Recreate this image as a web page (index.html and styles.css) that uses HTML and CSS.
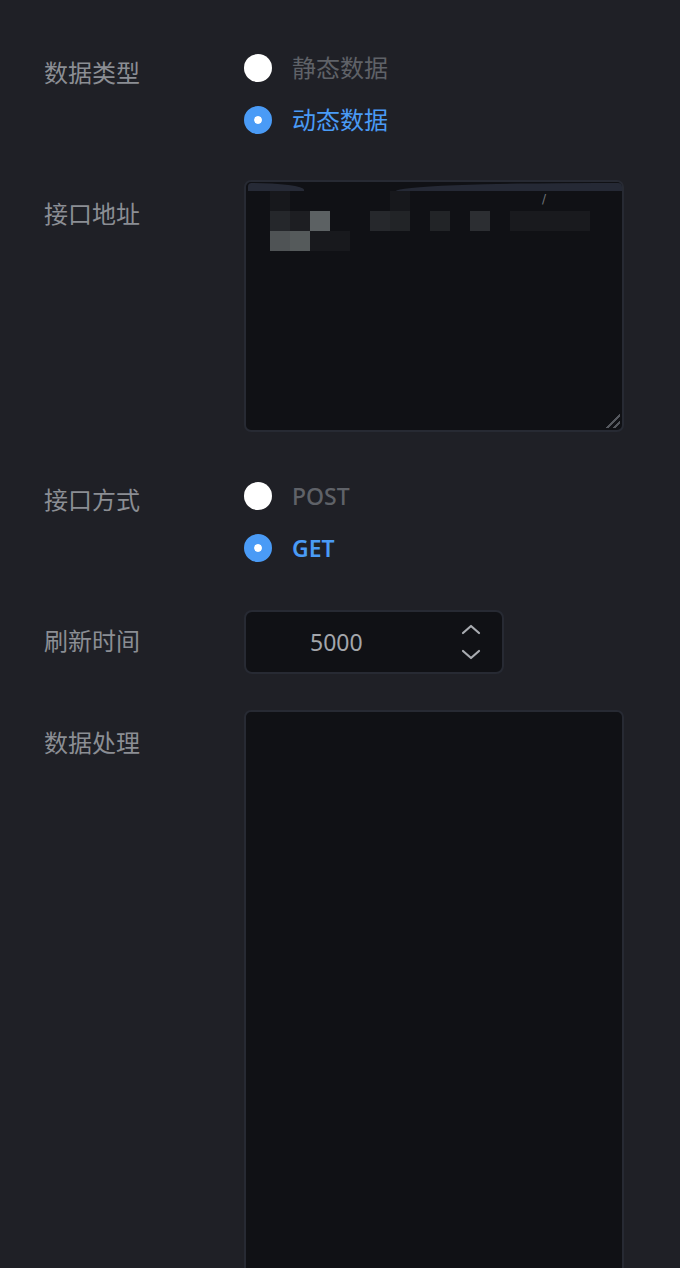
FILE: index.html
```html
<!DOCTYPE html>
<html lang="zh-CN">
<head>
<meta charset="utf-8">
<title>数据配置</title>
<link rel="stylesheet" href="styles.css">
</head>
<body>
<div class="form">
  <div class="row row-type">
    <div class="label l-type">数据类型</div>
    <div class="radios">
      <div class="radio"><span class="dot"></span><span class="rtext">静态数据</span></div>
      <div class="radio on"><span class="dot"></span><span class="rtext">动态数据</span></div>
    </div>
  </div>

  <div class="row row-url">
    <div class="label l-url">接口地址</div>
    <div class="area area-url">
      <div class="mosaic">
        <span class="hl hl-a"></span>
        <span class="hl hl-b"></span>
        <span class="px" style="left:24px;top:9px;width:20px;height:20px;background:#17181c"></span>
        <span class="px" style="left:144px;top:9px;width:20px;height:20px;background:#17181c"></span>
        <span class="px" style="left:24px;top:29px;width:20px;height:20px;background:#25272b"></span>
        <span class="px" style="left:44px;top:29px;width:20px;height:20px;background:#1d1e22"></span>
        <span class="px" style="left:64px;top:29px;width:20px;height:20px;background:#5c6163"></span>
        <span class="px" style="left:124px;top:29px;width:20px;height:20px;background:#26282c"></span>
        <span class="px" style="left:144px;top:29px;width:20px;height:20px;background:#222427"></span>
        <span class="px" style="left:184px;top:29px;width:20px;height:20px;background:#222427"></span>
        <span class="px" style="left:224px;top:29px;width:20px;height:20px;background:#2c2e32"></span>
        <span class="px" style="left:264px;top:29px;width:80px;height:20px;background:#191a1e"></span>
        <span class="px" style="left:24px;top:49px;width:20px;height:20px;background:#4f5355"></span>
        <span class="px" style="left:44px;top:49px;width:20px;height:20px;background:#555a5b"></span>
        <span class="px" style="left:64px;top:49px;width:40px;height:20px;background:#18191d"></span>
        <span class="slash">/</span>
      </div>
      <span class="grip"></span>
    </div>
  </div>

  <div class="row row-method">
    <div class="label l-method">接口方式</div>
    <div class="radios">
      <div class="radio"><span class="dot"></span><span class="rtext latin">POST</span></div>
      <div class="radio on"><span class="dot"></span><span class="rtext latin">GET</span></div>
    </div>
  </div>

  <div class="row row-time">
    <div class="label l-time">刷新时间</div>
    <div class="number">
      <span class="num">5000</span>
      <span class="spin">
        <svg width="22" height="12" viewBox="0 0 22 12"><path d="M3 10 L11 3 L19 10" fill="none" stroke="#a9acb1" stroke-width="2.2" stroke-linecap="round" stroke-linejoin="round"/></svg>
        <svg width="22" height="12" viewBox="0 0 22 12"><path d="M3 2 L11 9 L19 2" fill="none" stroke="#a9acb1" stroke-width="2.2" stroke-linecap="round" stroke-linejoin="round"/></svg>
      </span>
    </div>
  </div>

  <div class="row row-proc">
    <div class="label l-proc">数据处理</div>
    <div class="area area-proc"></div>
  </div>
</div>
</body>
</html>
```

FILE: styles.css
```css
html, body {
  margin: 0;
  padding: 0;
  background: #1f2026;
  height: 1268px;
  overflow: hidden;
}
body {
  font-family: "Noto Sans", "Noto Sans CJK SC", sans-serif;
}
.form {
  padding: 50px 56px 0 44px;
  display: flex;
  flex-direction: column;
}
.row {
  display: flex;
  align-items: flex-start;
}
.label {
  width: 200px;
  flex: none;
  font-family: "Noto Sans CJK SC", sans-serif;
  font-size: 24px;
  line-height: 36px;
  color: #8b8e94;
}
.l-type { margin-top: 4px; }
.l-url { margin-top: 15px; }
.l-method { margin-top: 3px; }
.l-time { margin-top: 12px; }
.l-proc { margin-top: 14px; }

.row-url { margin-top: 42px; }
.row-method { margin-top: 46px; }
.row-time { margin-top: 44px; }
.row-proc { margin-top: 36px; }

.radios {
  display: flex;
  flex-direction: column;
  gap: 16px;
}
.radio {
  height: 36px;
  display: flex;
  align-items: center;
  gap: 20px;
}
.dot {
  width: 28px;
  height: 28px;
  border-radius: 50%;
  background: #ffffff;
  box-sizing: border-box;
  flex: none;
}
.radio.on .dot {
  background: #4a9bf6;
  border: 10px solid #4a9bf6;
  box-shadow: inset 0 0 0 4px #ffffff;
}
.rtext {
  font-family: "Noto Sans CJK SC", sans-serif;
  font-size: 24px;
  color: #5f6268;
  line-height: 36px;
  margin-top: -3px;
}
.rtext.latin {
  font-family: "Noto Sans", sans-serif;
  font-size: 23px;
  font-weight: 500;
  margin-top: -1px;
}
.radio.on .rtext {
  color: #4a9bf6;
}
.radio.on .rtext.latin {
  font-weight: 600;
}

.area {
  width: 380px;
  box-sizing: border-box;
  background: #101115;
  border: 2px solid #272a33;
  border-radius: 7px;
  position: relative;
}
.area-url {
  height: 252px;
}
.area-proc {
  height: 600px;
}
.mosaic {
  position: absolute;
  left: 0;
  top: 0;
  right: 0;
  height: 80px;
}
.px {
  position: absolute;
  display: block;
}
.hl {
  position: absolute;
  display: block;
  top: 1px;
  height: 8px;
  background: #262a36;
}
.hl-a {
  left: 2px;
  width: 56px;
  border-radius: 4px 60px 0 0 / 4px 8px 0 0;
}
.hl-b {
  left: 150px;
  width: 226px;
  border-radius: 200px 4px 0 0 / 8px 4px 0 0;
  background: #252935;
}
.slash {
  position: absolute;
  left: 296px;
  top: 10px;
  font-size: 12px;
  color: #70757a;
  font-family: "DejaVu Sans", sans-serif;
}
.grip {
  position: absolute;
  right: 2px;
  bottom: 2px;
  width: 14px;
  height: 14px;
  background:
    linear-gradient(135deg, transparent 0 47%, #55585e 47% 58%, transparent 58% 72%, #55585e 72% 83%, transparent 83%);
}

.number {
  width: 260px;
  height: 64px;
  box-sizing: border-box;
  background: #101115;
  border: 2px solid #272a33;
  border-radius: 8px;
  display: flex;
  align-items: center;
  padding: 0 20px 0 64px;
}
.num {
  flex: 1;
  font-family: "Noto Sans", sans-serif;
  font-size: 23px;
  color: #a3a6ab;
}
.spin {
  display: flex;
  flex-direction: column;
  gap: 14px;
}
.spin svg {
  display: block;
}
```
